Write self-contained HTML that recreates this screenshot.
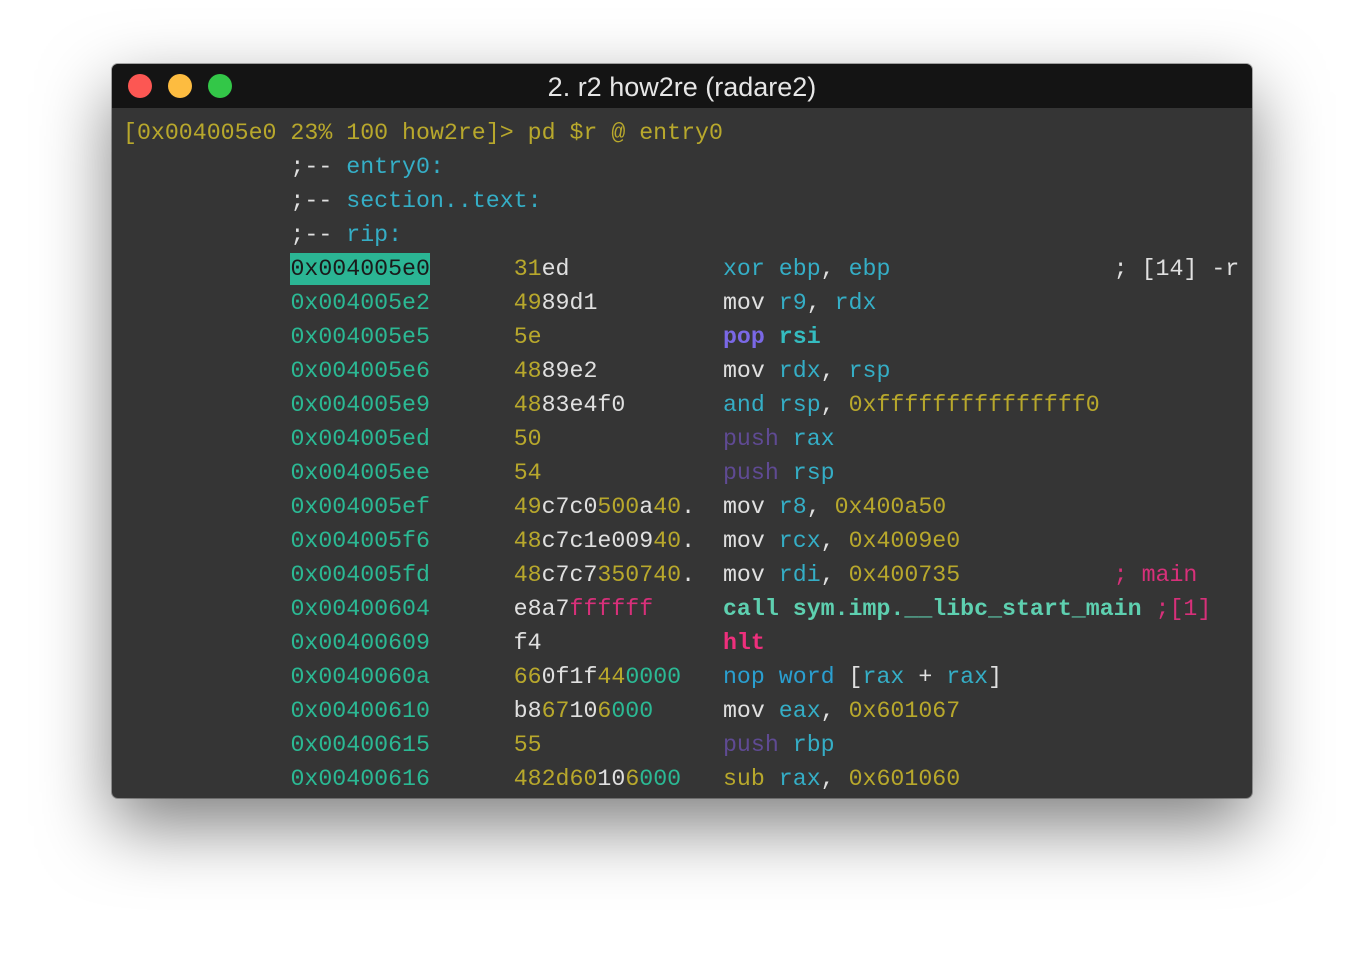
<!DOCTYPE html>
<html><head><meta charset="utf-8"><style>
html,body{margin:0;padding:0;background:#fff;width:1364px;height:958px;overflow:hidden}
.win{position:absolute;left:112px;top:64px;width:1140px;height:734px;border-radius:6px;background:#353535;box-shadow:0 28px 70px rgba(0,0,0,.5),0 0 0 1px rgba(0,0,0,.3);overflow:hidden}
.tb{height:44px;background:#141414;position:relative;color:#e6e6e6;font:27px "Liberation Sans",sans-serif;text-align:center;line-height:46px}
.d{position:absolute;top:10px;width:24px;height:24px;border-radius:50%}
pre{position:absolute;left:11px;top:52px;margin:0;font:23.25px/34px "Liberation Mono",monospace;color:#e0e0e0;white-space:pre}
.y{color:#b8a82c}.c{color:#35aec6}.g{color:#2bb994}.w{color:#e2e2e2}.p{color:#5f4a93}.pb{color:#7a68e6;font-weight:bold}.m{color:#d8307a}.mb{color:#ee2f7c;font-weight:bold}.gb{color:#5ed0b0;font-weight:bold}.cb{color:#35bcc0;font-weight:bold}.b{color:#2a9fd0}
.hl{background:#2bb594;color:#1a1a1a;display:inline-block;line-height:32px;vertical-align:top;margin-top:1px}
</style></head><body>
<div class="win">
<div class="tb"><span class="d" style="left:16px;background:#fc5753"></span><span class="d" style="left:56px;background:#fdbc40"></span><span class="d" style="left:96px;background:#33c748"></span>2. r2 how2re (radare2)</div>
<pre><span class="y">[0x004005e0 23% 100 how2re]&gt; pd $r @ entry0</span>
            ;-- <span class="c">entry0:</span>
            ;-- <span class="c">section..text:</span>
            ;-- <span class="c">rip:</span>
            <span class="hl">0x004005e0</span>      <span class="y">31</span>ed           <span class="c">xor ebp</span>, <span class="c">ebp</span>                ; [14] -r
            <span class="g">0x004005e2</span>      <span class="y">49</span>89d1         mov <span class="c">r9</span>, <span class="c">rdx</span>
            <span class="g">0x004005e5</span>      <span class="y">5e</span>             <span class="pb">pop</span> <span class="cb">rsi</span>
            <span class="g">0x004005e6</span>      <span class="y">48</span>89e2         mov <span class="c">rdx</span>, <span class="c">rsp</span>
            <span class="g">0x004005e9</span>      <span class="y">48</span>83e4f0       <span class="c">and rsp</span>, <span class="y">0xfffffffffffffff0</span>
            <span class="g">0x004005ed</span>      <span class="y">50</span>             <span class="p">push</span> <span class="c">rax</span>
            <span class="g">0x004005ee</span>      <span class="y">54</span>             <span class="p">push</span> <span class="c">rsp</span>
            <span class="g">0x004005ef</span>      <span class="y">49</span>c7c0<span class="y">500</span>a<span class="y">40</span>.  mov <span class="c">r8</span>, <span class="y">0x400a50</span>
            <span class="g">0x004005f6</span>      <span class="y">48</span>c7c1e009<span class="y">40</span>.  mov <span class="c">rcx</span>, <span class="y">0x4009e0</span>
            <span class="g">0x004005fd</span>      <span class="y">48</span>c7c7<span class="y">350740</span>.  mov <span class="c">rdi</span>, <span class="y">0x400735</span>           <span class="m">; main</span>
            <span class="g">0x00400604</span>      e8a7<span class="m">ffffff</span>     <span class="gb">call sym.imp.__libc_start_main</span> <span class="m">;[1]</span>
            <span class="g">0x00400609</span>      f4             <span class="mb">hlt</span>
            <span class="g">0x0040060a</span>      <span class="y">66</span>0f1f<span class="y">44</span><span class="g">0000</span>   <span class="b">nop word</span> [<span class="c">rax</span> + <span class="c">rax</span>]
            <span class="g">0x00400610</span>      b8<span class="y">67</span>10<span class="y">6</span><span class="g">000</span>     mov <span class="c">eax</span>, <span class="y">0x601067</span>
            <span class="g">0x00400615</span>      <span class="y">55</span>             <span class="p">push</span> <span class="c">rbp</span>
            <span class="g">0x00400616</span>      <span class="y">482d60</span>10<span class="y">6</span><span class="g">000</span>   <span class="y">sub</span> <span class="c">rax</span>, <span class="y">0x601060</span></pre>
</div>
</body></html>
